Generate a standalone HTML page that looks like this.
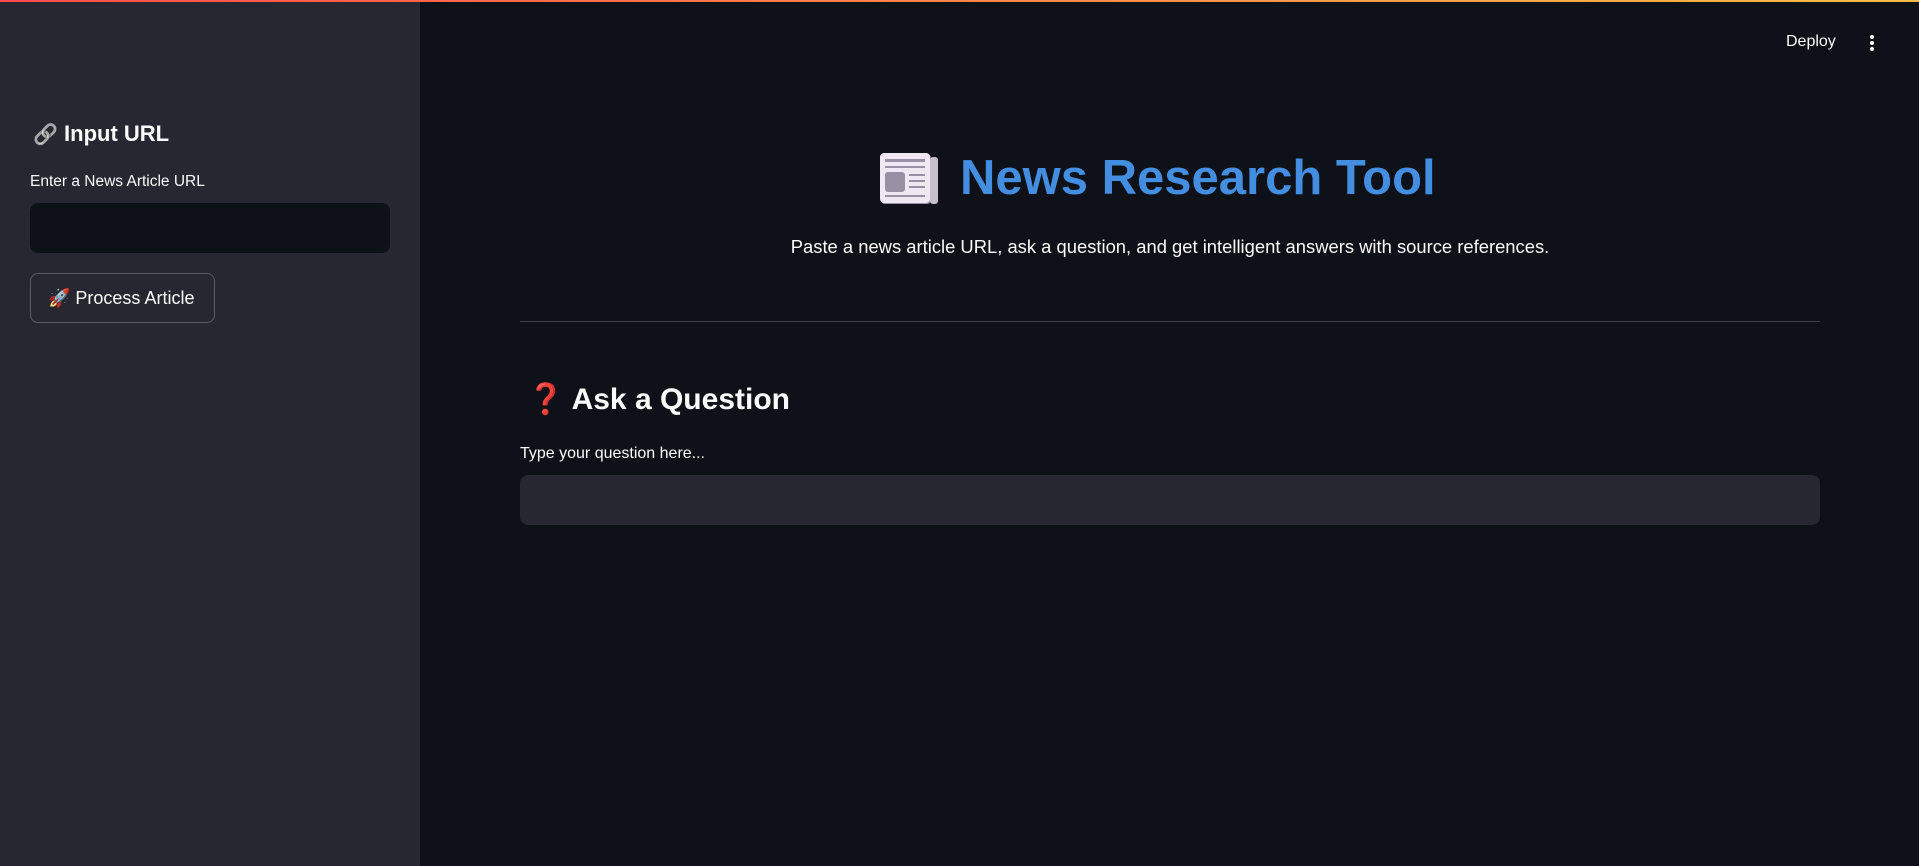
<!DOCTYPE html>
<html><head><meta charset="utf-8"><style>
*{margin:0;padding:0;box-sizing:border-box}
body{width:1919px;height:866px;background:#0e1117;font-family:"Liberation Sans","Noto Sans CJK JP",sans-serif;color:#fafafa;position:relative;overflow:hidden}
.topbar{position:absolute;top:0;left:0;width:1919px;height:2px;background:linear-gradient(90deg,#ff4b4b,#ffbd45)}
.side{position:absolute;left:0;top:0;width:420px;height:866px;background:#262730}
.abs{position:absolute}
</style></head><body>
<div class="side"></div>
<div class="topbar"></div>
<div class="abs" style="left:33px;top:118px;font-size:22px;font-weight:bold;line-height:32px">
<span style="font-size:20px;filter:grayscale(1)">🔗</span> Input URL</div>
<div class="abs" style="left:30px;top:173px;font-size:15.5px">Enter a News Article URL</div>
<div class="abs" style="left:30px;top:203px;width:360px;height:50px;background:#0e1117;border-radius:8px"></div>
<div class="abs" style="left:30px;top:273px;width:185px;height:50px;border:1px solid #5a5b63;border-radius:8px;font-size:18px;line-height:48px;padding-left:17px">🚀 Process Article</div>
<div class="abs" style="left:1786px;top:33px;font-size:16px">Deploy</div>
<svg class="abs" style="left:1864px;top:33px" width="16" height="20"><circle cx="8" cy="4" r="2" fill="#fafafa"/><circle cx="8" cy="10" r="2" fill="#fafafa"/><circle cx="8" cy="16" r="2" fill="#fafafa"/></svg>
<svg class="abs" style="left:880px;top:153px" width="60" height="52" viewBox="0 0 60 52">
<rect x="1" y="1" width="50" height="50" rx="4" fill="#9a90a4"/><rect x="0" y="0" width="50" height="50" rx="4" fill="#f0e8f2"/>
<rect x="5" y="6" width="40" height="3" fill="#9a90a4"/><rect x="5" y="13" width="40" height="2" fill="#9a90a4"/>
<rect x="5" y="19" width="20" height="20" rx="3" fill="#9a90a4"/>
<rect x="29" y="21" width="16" height="2" fill="#9a90a4"/><rect x="29" y="27" width="16" height="2" fill="#9a90a4"/><rect x="29" y="33" width="16" height="2" fill="#9a90a4"/><rect x="5" y="42" width="40" height="2" fill="#9a90a4"/>
<rect x="50" y="4" width="8" height="47" rx="3" fill="#c8bfcc"/></svg>
<div class="abs" style="left:960px;top:146px;font-size:49px;font-weight:bold;color:#438ee0;line-height:64px">News Research Tool</div>
<div class="abs" style="left:520px;width:1300px;top:236px;text-align:center;font-size:18.4px">Paste a news article URL, ask a question, and get intelligent answers with source references.</div>
<div class="abs" style="left:520px;top:321px;width:1300px;height:1px;background:#3d4048"></div>
<div class="abs" style="left:527px;top:380px;font-size:30px;font-weight:bold;line-height:40px"><span style="color:#ef3340">❓</span> Ask a Question</div>
<div class="abs" style="left:520px;top:445px;font-size:16px">Type your question here...</div>
<div class="abs" style="left:520px;top:475px;width:1300px;height:50px;background:#262730;border-radius:8px"></div>
</body></html>
